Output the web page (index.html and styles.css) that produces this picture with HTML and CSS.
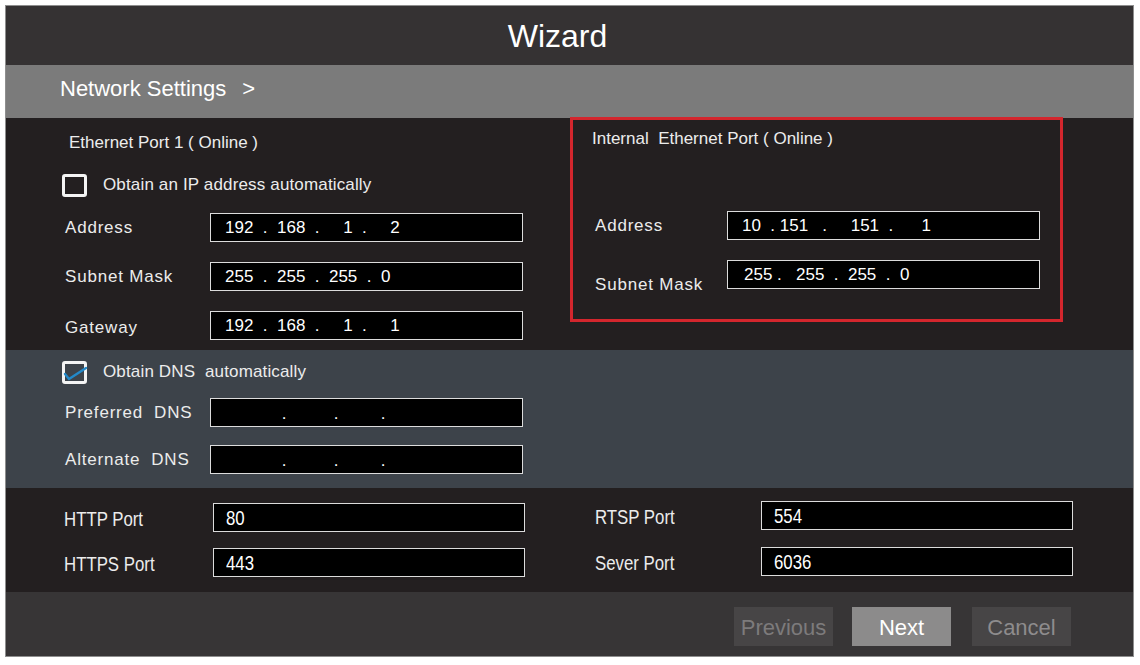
FILE: index.html
```html
<!DOCTYPE html>
<html lang="en">
<head>
<meta charset="utf-8">
<title>Wizard - Network Settings</title>
<link rel="stylesheet" href="styles.css">
</head>
<body>
<div class="frame">
  <header class="title">Wizard</header>
  <div class="crumb">Network Settings<span class="chev">&gt;</span></div>

  <section class="main">
    <div class="left">
      <div class="sec-title">Ethernet Port 1 ( Online )</div>
      <div class="check-row">
        <span class="box"></span>
        <span class="check-text">Obtain an IP address automatically</span>
      </div>
      <div class="row first">
        <span class="lbl">Address</span>
        <div class="ip">192  .  168  .     1  .     2</div>
      </div>
      <div class="row">
        <span class="lbl">Subnet Mask</span>
        <div class="ip">255  .  255  .  255  .  0</div>
      </div>
      <div class="row">
        <span class="lbl gw">Gateway</span>
        <div class="ip">192  .  168  .     1  .     1</div>
      </div>
    </div>

    <div class="internal">
      <div class="int-title">Internal  Ethernet Port ( Online )</div>
      <div class="row int-first">
        <span class="lbl int-lbl">Address</span>
        <div class="ip">10  . 151   .     151  .      1</div>
      </div>
      <div class="row int-second">
        <span class="lbl int-lbl low">Subnet Mask</span>
        <div class="ip sub">255 .   255  .  255  .  0</div>
      </div>
    </div>
  </section>

  <section class="dns">
    <div class="check-row dns-check">
      <span class="box checked">
        <svg viewBox="0 0 26 24" width="26" height="24" aria-hidden="true">
          <path d="M3 13 L7 18 L24 7" fill="none" stroke="#2389c9" stroke-width="2.4" stroke-linecap="round" stroke-linejoin="round"/>
        </svg>
      </span>
      <span class="check-text">Obtain DNS  automatically</span>
    </div>
    <div class="row dns-first">
      <span class="lbl">Preferred  DNS</span>
      <div class="ip dots">            .          .         .</div>
    </div>
    <div class="row dns-second">
      <span class="lbl">Alternate  DNS</span>
      <div class="ip dots">            .          .         .</div>
    </div>
  </section>

  <section class="ports">
    <div class="port-col left-ports">
      <div class="prow p1">
        <span class="plbl"><span class="cond">HTTP Port</span></span>
        <div class="pin"><span class="cond">80</span></div>
      </div>
      <div class="prow p2">
        <span class="plbl"><span class="cond">HTTPS Port</span></span>
        <div class="pin"><span class="cond">443</span></div>
      </div>
    </div>
    <div class="port-col right-ports">
      <div class="prow p1">
        <span class="plbl"><span class="cond">RTSP Port</span></span>
        <div class="pin"><span class="cond">554</span></div>
      </div>
      <div class="prow p2">
        <span class="plbl"><span class="cond">Sever Port</span></span>
        <div class="pin"><span class="cond">6036</span></div>
      </div>
    </div>
  </section>

  <footer class="actions">
    <button class="btn prev" type="button">Previous</button>
    <button class="btn next" type="button">Next</button>
    <button class="btn cancel" type="button">Cancel</button>
  </footer>
</div>
</body>
</html>
```

FILE: styles.css
```css
* { box-sizing: border-box; }

html, body {
  margin: 0;
  padding: 0;
  background: #ffffff;
}

body {
  font-family: "Liberation Sans", Arial, sans-serif;
  color: #ececec;
}

.frame {
  margin: 5px 0 0 5px;
  width: 1129px;
  height: 652px;
  border: 1px solid #8e8e8e;
  display: flex;
  flex-direction: column;
  background: #231f20;
}

/* Title bar */
.title {
  height: 59px;
  background: #353233;
  color: #ffffff;
  font-size: 32px;
  line-height: 60px;
  text-align: center;
  padding-right: 24px;
  flex: none;
}

/* Breadcrumb bar */
.crumb {
  height: 53px;
  background: #7b7b7b;
  color: #ffffff;
  font-size: 22px;
  line-height: 48px;
  padding-left: 54px;
  flex: none;
}
.chev { margin-left: 16px; }

/* Main section */
.main {
  height: 232px;
  background: #231f20;
  display: flex;
  flex: none;
}
.left {
  width: 564px;
  padding-left: 56px;
}
.sec-title {
  margin: 15px 0 0 7px;
  height: 20px;
  line-height: 20px;
  font-size: 17px;
}

.check-row {
  display: flex;
  align-items: center;
  height: 24px;
  margin-top: 20px;
}
.box {
  width: 25px;
  height: 23px;
  border: 3px solid #f4f4f4;
  border-radius: 3px;
  flex: none;
  position: relative;
}
.box svg {
  position: absolute;
  left: -3px;
  top: -3px;
}
.check-text {
  margin-left: 16px;
  font-size: 17px;
  letter-spacing: 0.15px;
  white-space: pre;
}

.row {
  display: flex;
  align-items: center;
  height: 29px;
  margin-top: 20px;
}
.row.first { margin-top: 16px; }
.lbl {
  width: 145px;
  margin-left: 3px;
  font-size: 17px;
  letter-spacing: 0.8px;
  white-space: pre;
  flex: none;
}
.lbl.gw { padding-top: 4px; }

.ip {
  width: 313px;
  height: 29px;
  background: #000;
  border: 1.5px solid #dcdcdc;
  color: #ffffff;
  font-size: 17px;
  line-height: 28px;
  padding-left: 14px;
  white-space: pre;
  flex: none;
}
.ip.dots { line-height: 30px; }

/* Internal ethernet (highlighted) */
.internal {
  width: 493px;
  height: 205px;
  margin-top: -1px;
  border: 3px solid #d3262d;
  flex: none;
}
.int-title {
  margin: 9px 0 0 19px;
  height: 20px;
  line-height: 20px;
  font-size: 17px;
  white-space: pre;
}
.row.int-first { margin-top: 62px; }
.row.int-second { margin-top: 20px; }
.lbl.int-lbl {
  margin-left: 22px;
  width: 132px;
}
.lbl.low { padding-top: 20px; }
.ip.sub { padding-left: 16px; }

/* DNS section */
.dns {
  height: 138px;
  background: #3d434a;
  padding-left: 56px;
  flex: none;
}
.dns-check { margin-top: 10px; }
.row.dns-first { margin-top: 14px; }
.row.dns-second { margin-top: 18px; }

/* Ports section */
.ports {
  height: 104px;
  background: #231f20;
  display: flex;
  flex: none;
}
.port-col { flex: none; }
.left-ports {
  width: 589px;
  padding-left: 58px;
  padding-top: 15px;
}
.right-ports {
  padding-top: 13px;
}
.prow {
  display: flex;
  align-items: center;
  height: 29px;
}
.prow.p2 { margin-top: 16px; }
.right-ports .prow.p2 { margin-top: 17px; }
.cond {
  display: inline-block;
  transform: scaleX(0.8);
  transform-origin: left center;
  white-space: nowrap;
}
.plbl {
  font-size: 21px;
  line-height: 24px;
  white-space: nowrap;
  flex: none;
  padding-top: 3px;
}
.left-ports .plbl { width: 149px; }
.right-ports .plbl { width: 166px; }
.pin {
  width: 312px;
  height: 29px;
  background: #000;
  border: 1.5px solid #dcdcdc;
  color: #fff;
  font-size: 21px;
  line-height: 27px;
  padding-left: 12px;
  flex: none;
}

/* Footer */
.actions {
  flex: 1;
  background: #373536;
  display: flex;
  justify-content: flex-end;
  align-items: flex-start;
  padding: 15px 62px 0 0;
}
.btn {
  width: 99px;
  height: 39px;
  border: none;
  margin: 0;
  padding: 0;
  font-family: "Liberation Sans", Arial, sans-serif;
  font-size: 22px;
  line-height: 42px;
  cursor: pointer;
}
.btn.prev {
  background: #474546;
  color: #7d7b7c;
}
.btn.next {
  margin-left: 19px;
  background: #8c8b8b;
  color: #ffffff;
}
.btn.cancel {
  margin-left: 21px;
  background: #474546;
  color: #8e8c8d;
}
```
